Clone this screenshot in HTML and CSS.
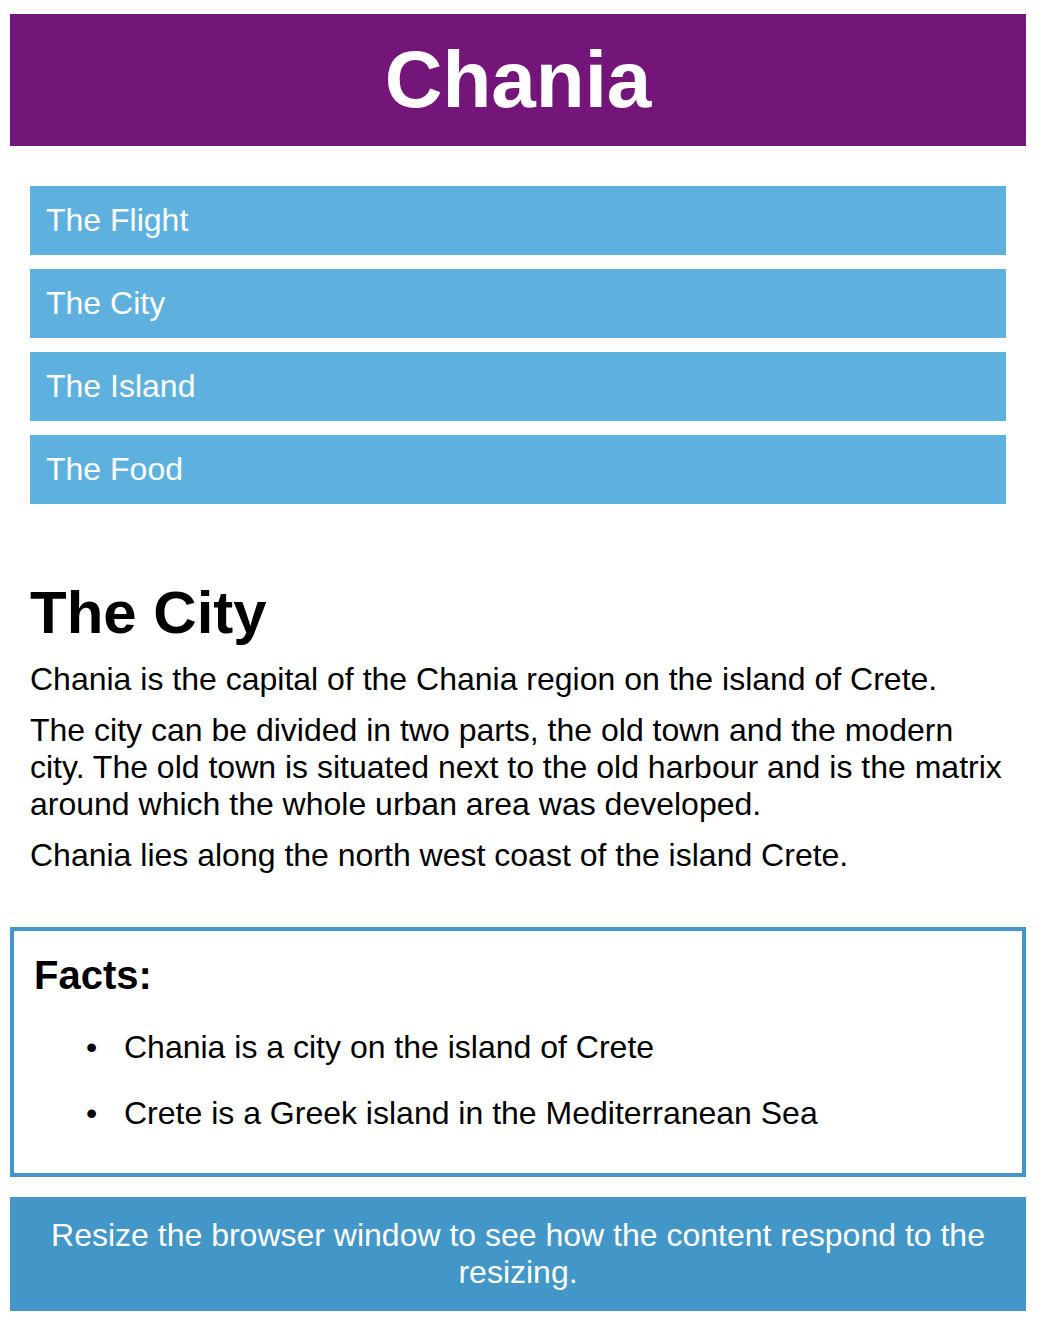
FILE: index.html
```html
<!DOCTYPE html>
<html lang="en">
<head>
<meta charset="utf-8">
<title>Chania</title>
<link rel="stylesheet" href="styles.css">
</head>
<body>
<div class="page">
  <header class="header">
    <h1 class="header-title">Chania</h1>
  </header>
  <nav class="menu">
    <ul class="menu-list">
      <li class="menu-item">The Flight</li>
      <li class="menu-item">The City</li>
      <li class="menu-item">The Island</li>
      <li class="menu-item">The Food</li>
    </ul>
  </nav>
  <main class="main">
    <h1 class="main-title">The City</h1>
    <p class="text">Chania is the capital of the Chania region on the island of Crete.</p>
    <p class="text">The city can be divided in two parts, the old town and the modern city. The old town is situated next to the old harbour and is the matrix around which the whole urban area was developed.</p>
    <p class="text">Chania lies along the north west coast of the island Crete.</p>
  </main>
  <aside class="facts">
    <h2 class="facts-title">Facts:</h2>
    <ul class="facts-list">
      <li class="facts-item">Chania is a city on the island of Crete</li>
      <li class="facts-item">Crete is a Greek island in the Mediterranean Sea</li>
    </ul>
  </aside>
  <footer class="footer">
    <p class="footer-text">Resize the browser window to see how the content respond to the resizing.</p>
  </footer>
</div>
</body>
</html>
```
FILE: styles.css
```css
* {
  box-sizing: border-box;
}

html, body {
  margin: 0;
  padding: 0;
  background: #ffffff;
}

body {
  font-family: "Liberation Sans", Arial, Helvetica, sans-serif;
  font-size: 32px;
  color: #000000;
}

.page {
  width: 1016px;
  margin: 14px 0 0 10px;
  display: flex;
  flex-direction: column;
}

.header {
  background: #741579;
  color: #ffffff;
  padding: 20px 0;
  text-align: center;
}

.header-title {
  margin: 0;
  font-size: 80px;
  line-height: 92px;
  font-weight: bold;
}

.menu {
  margin-top: 40px;
  padding: 0 20px;
}

.menu-list {
  list-style: none;
  margin: 0;
  padding: 0;
  display: flex;
  flex-direction: column;
  gap: 14px;
}

.menu-item {
  background: #5eb1df;
  color: #ffffff;
  padding: 16px;
  line-height: normal;
}

.main {
  padding: 0 20px;
  margin-top: 74px;
}

.main-title {
  margin: 0 0 14px;
  font-size: 60px;
  font-weight: bold;
  line-height: normal;
}

.text {
  margin: 0 0 14px;
  line-height: normal;
}

.text:last-child {
  margin-bottom: 0;
}

.facts {
  margin-top: 53px;
  border: 4px solid #4396c8;
  padding: 22px 20px 41px 20px;
}

.facts-title {
  margin: 0;
  font-size: 40px;
  font-weight: bold;
  line-height: normal;
}

.facts-list {
  margin: 31px 0 0;
  padding-left: 90px;
  list-style: none;
}

.facts-item {
  line-height: normal;
}

.facts-item::before {
  content: "\2022";
  display: inline-block;
  width: 38px;
  margin-left: -38px;
}

.facts-item + .facts-item {
  margin-top: 29px;
}

.footer {
  margin-top: 20px;
  background: #4396c8;
  color: #ffffff;
  padding: 20px;
  text-align: center;
}

.footer-text {
  margin: 0;
  line-height: normal;
}
```
